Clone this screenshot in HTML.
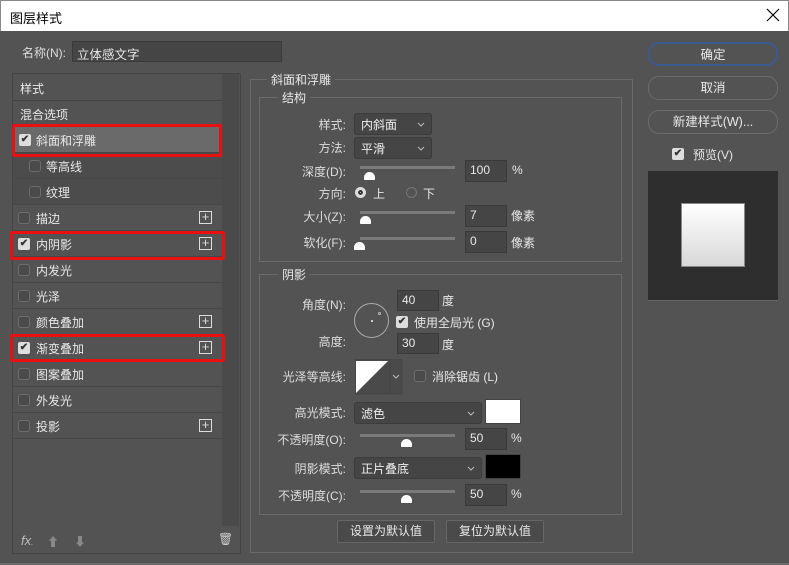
<!DOCTYPE html>
<html><head><meta charset="utf-8"><style>
*{box-sizing:border-box;margin:0;padding:0}
body{width:789px;height:565px;background:#535353;font-family:"Liberation Sans","Noto Sans CJK SC",sans-serif;font-size:12px;color:#e8e8e8;position:relative;overflow:hidden}
.a{position:absolute}
.title{left:0;top:0;width:789px;height:31px;background:#fff;color:#000;font-size:13px;padding:7px 0 0 9px;border:1px solid #888;border-bottom:none}
.lbl{text-align:right;color:#ddd;white-space:nowrap}
.inp{background:#454545;border:1px solid #3a3a3a;color:#e8e8e8;padding:2px 4px;font-size:12px}
.sel{background:#454545;border:1px solid #3c3c3c;border-radius:3px;padding:2px 6px;color:#eee}
.chev{position:absolute;right:6px;top:8px}
.track{height:3px;background:#7a7a7a}
.th{position:absolute;width:11px;height:8px;background:#fff;border-radius:6px 6px 1px 1px}
.cb{width:12px;height:12px;border:1px solid #6c6c6c;border-radius:3px;background:#4a4a4a}
.cbk{width:12px;height:12px;border-radius:2px;background:#ddd;color:#333;font-size:10px;line-height:12px;text-align:center;font-weight:bold}
.row{left:13px;width:209px;height:26px;border-bottom:1px solid #474747;padding:5px 0 0 23px}
.plus{right:10px;top:6px;width:13px;height:13px;border:1px solid #ddd;color:#ddd;font-size:13px;line-height:10px;text-align:center}
.red{border:3px solid #e81010;border-radius:2px}
.fs{border:1px solid #6a6a6a}
.leg{background:#535353;padding:0 4px}
.btn{border:1px solid #6c6c6c;border-radius:11px;text-align:center;height:24px;line-height:22px;font-size:12.5px}
.rb{border:1px solid #666;border-radius:2px;background:#4a4a4a;text-align:center;height:23px;line-height:21px}
</style></head><body>
<div class="a title">图层样式</div>
<svg class="a" style="left:766px;top:8px" width="14" height="14"><path d="M1 1L13 13M13 1L1 13" stroke="#000" stroke-width="1.2"/></svg>

<div class="a lbl" style="left:22px;top:44px">名称(N):</div>
<div class="a inp" style="left:72px;top:41px;width:210px;height:21px;font-size:12.5px">立体感文字</div>

<div class="a" style="left:12px;top:73px;width:229px;height:481px;border:1px solid #444"></div>
<div class="a" style="left:222px;top:74px;width:17px;height:452px;background:#4a4a4a"></div>
<div class="a row" style="top:75px;height:26px;border-bottom:1px solid #444;padding-left:7px">样式</div>
<div class="a row" style="top:101px;padding-left:7px">混合选项</div>
<div class="a row" style="top:127px;background:#6a6a6a"><div class="a cbk" style="left:6px;top:7px">✔</div>斜面和浮雕</div>
<div class="a row" style="top:153px;background:#4c4c4c;padding-left:33px"><div class="a cb" style="left:16px;top:7px"></div>等高线</div>
<div class="a row" style="top:179px;background:#4c4c4c;padding-left:33px"><div class="a cb" style="left:16px;top:7px"></div>纹理</div>
<div class="a row" style="top:205px"><div class="a cb" style="left:5px;top:7px"></div>描边<div class="a plus">+</div></div>
<div class="a row" style="top:231px"><div class="a cbk" style="left:5px;top:7px">✔</div>内阴影<div class="a plus">+</div></div>
<div class="a row" style="top:257px"><div class="a cb" style="left:5px;top:7px"></div>内发光</div>
<div class="a row" style="top:283px"><div class="a cb" style="left:5px;top:7px"></div>光泽</div>
<div class="a row" style="top:309px"><div class="a cb" style="left:5px;top:7px"></div>颜色叠加<div class="a plus">+</div></div>
<div class="a row" style="top:335px"><div class="a cbk" style="left:5px;top:7px">✔</div>渐变叠加<div class="a plus">+</div></div>
<div class="a row" style="top:361px"><div class="a cb" style="left:5px;top:7px"></div>图案叠加</div>
<div class="a row" style="top:387px"><div class="a cb" style="left:5px;top:7px"></div>外发光</div>
<div class="a row" style="top:413px"><div class="a cb" style="left:5px;top:7px"></div>投影<div class="a plus">+</div></div>
<div class="a red" style="left:12px;top:124px;width:210px;height:33px"></div>
<div class="a red" style="left:10px;top:231px;width:215px;height:29px"></div>
<div class="a red" style="left:10px;top:334px;width:215px;height:28px"></div>
<div class="a" style="left:21px;top:533px;font-style:italic;color:#bbb;font-size:13px">fx<span style="font-size:8px">.</span></div>
<div class="a" style="left:47px;top:533px;color:#888;font-size:12px">⬆</div>
<div class="a" style="left:74px;top:533px;color:#888;font-size:12px">⬇</div>
<div class="a" style="left:218px;top:532px;color:#ccc;font-size:12px">🗑</div>

<div class="a fs" style="left:250px;top:79px;width:383px;height:474px"></div>
<div class="a leg" style="left:267px;top:71px">斜面和浮雕</div>
<div class="a fs" style="left:259px;top:97px;width:363px;height:165px"></div>
<div class="a leg" style="left:278px;top:89px">结构</div>

<div class="a lbl" style="left:300px;top:116px;width:46px">样式:</div>
<div class="a sel" style="left:354px;top:113px;width:78px;height:22px">内斜面<svg class="chev" width="8" height="5"><path d="M1 1l3 3l3-3" stroke="#bbb" fill="none"/></svg></div>
<div class="a lbl" style="left:300px;top:139px;width:46px">方法:</div>
<div class="a sel" style="left:354px;top:137px;width:78px;height:22px">平滑<svg class="chev" width="8" height="5"><path d="M1 1l3 3l3-3" stroke="#bbb" fill="none"/></svg></div>
<div class="a lbl" style="left:280px;top:163px;width:66px">深度(D):</div>
<div class="a track" style="left:360px;top:166px;width:95px"></div>
<div class="a th" style="left:364px;top:172px"></div>
<div class="a inp" style="left:465px;top:160px;width:42px;height:22px">100</div>
<div class="a" style="left:512px;top:163px">%</div>
<div class="a lbl" style="left:300px;top:185px;width:46px">方向:</div>
<div class="a" style="left:355px;top:187px;width:11px;height:11px;border-radius:50%;background:#ddd;border:3px solid #ddd;box-shadow:inset 0 0 0 2px #333"></div>
<div class="a" style="left:373px;top:185px">上</div>
<div class="a" style="left:406px;top:187px;width:11px;height:11px;border-radius:50%;border:1px solid #777"></div>
<div class="a" style="left:423px;top:185px">下</div>
<div class="a lbl" style="left:280px;top:208px;width:66px">大小(Z):</div>
<div class="a track" style="left:360px;top:211px;width:95px"></div>
<div class="a th" style="left:360px;top:216px"></div>
<div class="a inp" style="left:465px;top:205px;width:42px;height:22px">7</div>
<div class="a" style="left:511px;top:207px">像素</div>
<div class="a lbl" style="left:280px;top:234px;width:66px">软化(F):</div>
<div class="a track" style="left:360px;top:237px;width:95px"></div>
<div class="a th" style="left:354px;top:242px"></div>
<div class="a inp" style="left:465px;top:231px;width:42px;height:22px">0</div>
<div class="a" style="left:511px;top:234px">像素</div>

<div class="a fs" style="left:259px;top:274px;width:363px;height:241px"></div>
<div class="a leg" style="left:278px;top:266px">阴影</div>
<div class="a lbl" style="left:280px;top:296px;width:66px">角度(N):</div>
<div class="a" style="left:354px;top:303px;width:35px;height:35px;border-radius:50%;border:1px solid #aaa"></div>
<div class="a" style="left:371px;top:320px;width:2px;height:2px;background:#ccc"></div>
<div class="a" style="left:378px;top:312px;width:3px;height:3px;border:1px solid #bbb;border-radius:50%"></div>
<div class="a inp" style="left:397px;top:290px;width:42px;height:21px">40</div>
<div class="a" style="left:442px;top:292px">度</div>
<div class="a cbk" style="left:396px;top:316px">✔</div>
<div class="a" style="left:414px;top:314px">使用全局光 (G)</div>
<div class="a lbl" style="left:300px;top:333px;width:46px">高度:</div>
<div class="a inp" style="left:397px;top:333px;width:42px;height:21px">30</div>
<div class="a" style="left:442px;top:336px">度</div>
<div class="a lbl" style="left:270px;top:368px;width:76px">光泽等高线:</div>
<svg class="a" style="left:355px;top:359px" width="48" height="36"><rect x="0" y="0" width="35" height="35" fill="#4a4a4a" stroke="#444"/><polygon points="1,34 33,2 1,2" fill="#fff"/><rect x="35" y="0" width="12" height="35" fill="#4a4a4a" stroke="#444"/><path d="M38 16 l3 3 l3 -3" stroke="#bbb" fill="none"/></svg>
<div class="a cb" style="left:414px;top:370px"></div>
<div class="a" style="left:432px;top:368px">消除锯齿 (L)</div>
<div class="a lbl" style="left:270px;top:404px;width:76px">高光模式:</div>
<div class="a sel" style="left:354px;top:402px;width:128px;height:22px">滤色<svg class="chev" width="8" height="5"><path d="M1 1l3 3l3-3" stroke="#bbb" fill="none"/></svg></div>
<div class="a" style="left:485px;top:399px;width:36px;height:25px;background:#fff;border:1px solid #444"></div>
<div class="a lbl" style="left:270px;top:431px;width:76px">不透明度(O):</div>
<div class="a track" style="left:360px;top:434px;width:95px"></div>
<div class="a th" style="left:401px;top:439px"></div>
<div class="a inp" style="left:465px;top:428px;width:42px;height:22px">50</div>
<div class="a" style="left:511px;top:431px">%</div>
<div class="a lbl" style="left:270px;top:460px;width:76px">阴影模式:</div>
<div class="a sel" style="left:354px;top:457px;width:128px;height:22px">正片叠底<svg class="chev" width="8" height="5"><path d="M1 1l3 3l3-3" stroke="#bbb" fill="none"/></svg></div>
<div class="a" style="left:485px;top:454px;width:36px;height:25px;background:#000;border:1px solid #444"></div>
<div class="a lbl" style="left:270px;top:487px;width:76px">不透明度(C):</div>
<div class="a track" style="left:360px;top:490px;width:95px"></div>
<div class="a th" style="left:401px;top:495px"></div>
<div class="a inp" style="left:465px;top:484px;width:42px;height:22px">50</div>
<div class="a" style="left:511px;top:487px">%</div>
<div class="a rb" style="left:337px;top:520px;width:98px">设置为默认值</div>
<div class="a rb" style="left:446px;top:520px;width:98px">复位为默认值</div>

<div class="a btn" style="left:648px;top:42px;width:130px;border:2px solid #3a5a92">确定</div>
<div class="a btn" style="left:648px;top:76px;width:130px">取消</div>
<div class="a btn" style="left:648px;top:110px;width:130px">新建样式(W)...</div>
<div class="a cbk" style="left:672px;top:148px">✔</div>
<div class="a" style="left:693px;top:146px">预览(V)</div>
<div class="a" style="left:648px;top:171px;width:130px;height:130px;background:#2e2e2e;border-bottom:1px solid #666"></div>
<div class="a" style="left:681px;top:203px;width:64px;height:64px;border:1px solid #888;background:linear-gradient(#fff,#d8d8d8)"></div>
<div class="a" style="left:0;top:563px;width:789px;height:2px;background:#6a6a6a"></div>
</body></html>
